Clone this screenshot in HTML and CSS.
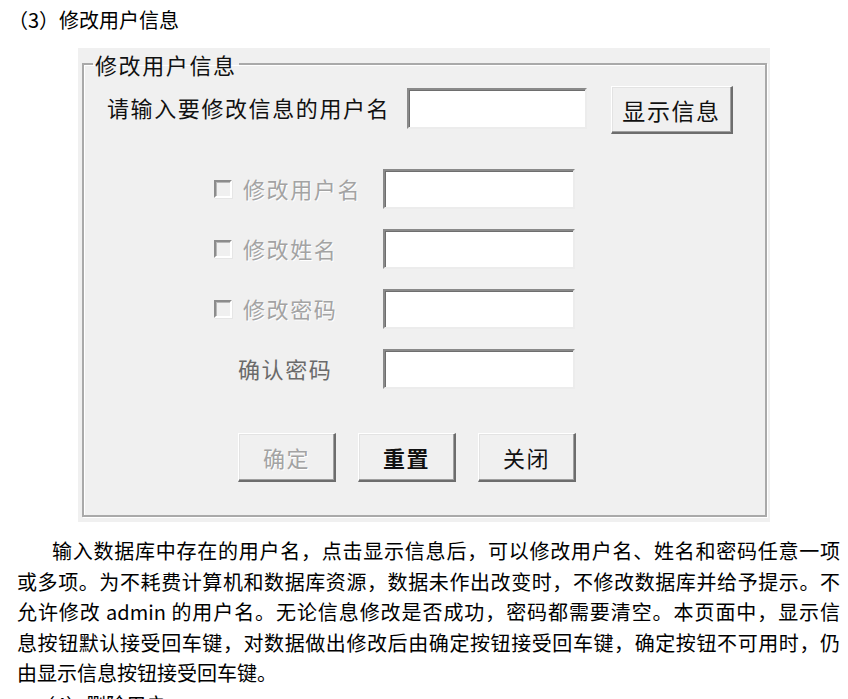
FILE: index.html
```html
<!DOCTYPE html>
<html lang="zh-CN">
<head>
<meta charset="utf-8">
<title>修改用户信息</title>
<link rel="stylesheet" href="styles.css">
</head>
<body>
<h3 class="heading">（3）修改用户信息</h3>
<div class="panel">
  <fieldset class="group">
    <legend class="legend">修改用户信息</legend>
    <div class="row-top">
      <span class="label-main">请输入要修改信息的用户名</span>
      <span class="field field-top"></span>
      <span class="btn btn-show">显示信息</span>
    </div>
    <div class="rows">
      <div class="row">
        <span class="check"></span>
        <span class="label label-disabled">修改用户名</span>
        <span class="field"></span>
      </div>
      <div class="row">
        <span class="check"></span>
        <span class="label label-disabled">修改姓名</span>
        <span class="field"></span>
      </div>
      <div class="row">
        <span class="check"></span>
        <span class="label label-disabled">修改密码</span>
        <span class="field"></span>
      </div>
      <div class="row">
        <span class="label label-confirm">确认密码</span>
        <span class="field"></span>
      </div>
    </div>
    <div class="buttons">
      <span class="btn btn-small btn-disabled">确定</span>
      <span class="btn btn-small btn-bold">重置</span>
      <span class="btn btn-small">关闭</span>
    </div>
  </fieldset>
</div>
<p class="para">
  <span class="line line-first">输入数据库中存在的用户名，点击显示信息后，可以修改用户名、姓名和密码任意一项</span>
  <span class="line">或多项。为不耗费计算机和数据库资源，数据未作出改变时，不修改数据库并给予提示。不</span>
  <span class="line">允许修改 admin 的用户名。无论信息修改是否成功，密码都需要清空。本页面中，显示信</span>
  <span class="line">息按钮默认接受回车键，对数据做出修改后由确定按钮接受回车键，确定按钮不可用时，仍</span>
  <span class="line line-last">由显示信息按钮接受回车键。</span>
</p>
<h3 class="heading heading-next">（4）删除用户</h3>
</body>
</html>
```

FILE: styles.css
```css
html, body {
  margin: 0;
  padding: 0;
  background: #ffffff;
}
body {
  font-family: "Noto Sans CJK SC", "Noto Sans", sans-serif;
  color: #000;
  width: 848px;
  overflow: hidden;
}
.heading {
  margin: 0;
  padding: 8px 0 0 8px;
  font-size: 20px;
  line-height: 24px;
  font-weight: normal;
}
.heading-next {
  padding: 4px 0 0 35px;
}
.panel {
  margin: 16px 0 0 78px;
  width: 692px;
  height: 474px;
  background: #f0f0f0;
  box-sizing: border-box;
  padding: 2px 3px 5px 4px;
}
.group {
  margin: 0;
  padding: 0;
  height: 467px;
  box-sizing: border-box;
  border: 2px solid #a9a9a9;
  box-shadow: 1px 1px 0 #ffffff, inset 1px 1px 0 #ffffff;
  font-size: 22px;
  letter-spacing: 1.6px;
}
.legend {
  margin-left: 9px;
  padding: 0 2px;
  line-height: 28px;
  font-size: 22px;
  color: #111;
}
.row-top {
  display: flex;
  align-items: flex-start;
  margin-top: 8px;
  padding-left: 23px;
  height: 48px;
}
.label-main {
  line-height: 42px;
  width: 300px;
  white-space: nowrap;
  color: #111;
}
.field {
  display: block;
  box-sizing: border-box;
  width: 192px;
  height: 40px;
  background: #fff;
  border-style: solid;
  border-width: 2px;
  border-color: #8a8a8a #ececec #ececec #8a8a8a;
  box-shadow: inset 1px 1px 0 #6e6e6e;
}
.field-top {
  width: 180px;
  height: 41px;
  margin-top: 2px;
}
.btn {
  display: flex;
  align-items: center;
  justify-content: center;
  box-sizing: border-box;
  background: #f0f0f0;
  border-style: solid;
  border-width: 1px 2px 2px 1px;
  border-color: #ffffff #6d6d6d #6d6d6d #ffffff;
  box-shadow: inset -1px -1px 0 #a0a0a0, inset 1px 1px 0 #e3e3e3;
  color: #111;
  white-space: nowrap;
}
.btn-show {
  width: 122px;
  height: 48px;
  margin-left: 24px;
  font-size: 23px;
}
.rows {
  display: flex;
  flex-direction: column;
  gap: 20px;
  margin-top: 35px;
  padding-left: 130px;
}
.row {
  display: flex;
  align-items: center;
  height: 40px;
}
.check {
  display: block;
  box-sizing: border-box;
  width: 18px;
  height: 18px;
  margin-right: 11px;
  background: #f0f0f0;
  border-style: solid;
  border-width: 2px;
  border-color: #8c8c8c #ffffff #ffffff #8c8c8c;
  box-shadow: inset 1px 1px 0 #b8b8b8, 1px 1px 0 #e6e6e6;
}
.label {
  white-space: nowrap;
  line-height: 40px;
  margin-top: -2px;
}
.label-disabled {
  width: 140px;
  color: #a3a3a3;
  text-shadow: 1px 1px 0 #ffffff;
}
.label-confirm {
  width: 145px;
  padding-left: 24px;
  color: #6a6a6a;
}
.buttons {
  display: flex;
  gap: 22px;
  margin-top: 44px;
  padding-left: 154px;
}
.btn-small {
  width: 98px;
  height: 49px;
  font-size: 22px;
}
.btn-disabled {
  color: #a3a3a3;
  text-shadow: 1px 1px 0 #ffffff;
}
.btn-bold {
  font-weight: bold;
}
.para {
  margin: 14px 0 0 0;
  padding: 0 8px 0 17px;
  font-size: 20px;
  line-height: 30.5px;
  color: #000;
}
.line {
  display: block;
  text-align: justify;
  text-align-last: justify;
  white-space: nowrap;
}
.line-first {
  padding-left: 35px;
}
.line-last {
  text-align-last: left;
}
```
